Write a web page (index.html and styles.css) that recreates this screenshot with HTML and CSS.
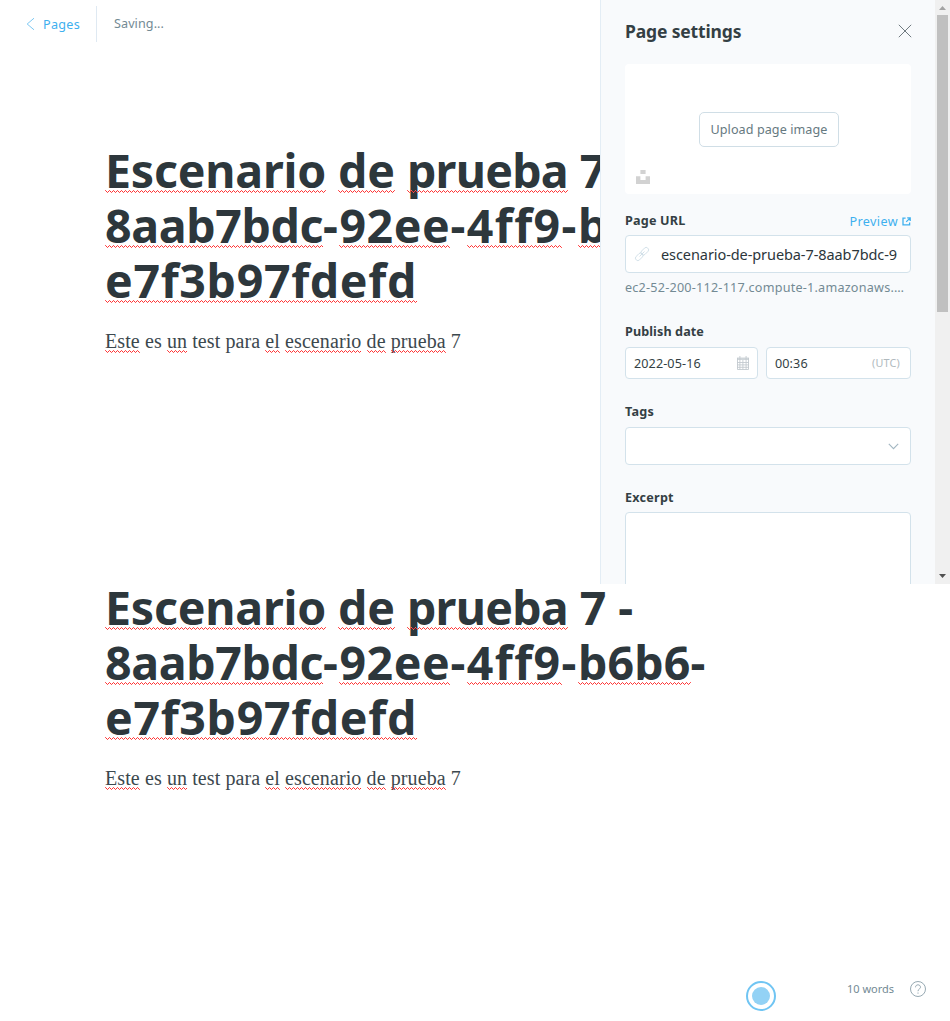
FILE: index.html
```html
<!DOCTYPE html>
<html lang="en">
<head>
<meta charset="utf-8">
<title>Page editor</title>
<link rel="stylesheet" href="styles.css">
</head>
<body>
<div class="screen">
  <main class="editor">
    <header class="topbar">
      <a class="back"><svg class="back-icon" width="9" height="14" viewBox="0 0 9 14"><path d="M8 1.2 1.2 7 8 12.8"/></svg><span class="back-text">Pages</span></a>
      <span class="status">Saving...</span>
    </header>
    <article class="post">
      <h1 class="title"><span class="sp w-escenario">Escenario</span> <span class="sp">de</span> <span class="sp w-prueba">prueba</span> <span>7</span> <span class="dash">-</span><br><span class="sp w-8aab">8aab7bdc</span><span class="dash">-</span><span class="sp w-92ee">92ee</span><span class="dash">-</span><span class="sp w-4ff9">4ff9</span><span class="dash">-</span><span class="sp w-b6b6">b6b6</span><span class="dash">-</span><br><span class="sp w-e7f3">e7f3b97fdefd</span></h1>
      <p class="text"><span class="sp">Este</span> es <span class="sp">un</span> test para <span class="sp">el</span> <span class="sp">escenario</span> <span class="sp">de</span> <span class="sp">prueba</span> 7</p>
    </article>
  </main>
  <aside class="panel">
    <div class="panel-head">
      <h2 class="panel-title">Page settings</h2>
      <svg class="close" width="14" height="14" viewBox="0 0 14 14"><path d="M.8.8 13.2 13.2M13.2.8.8 13.2"/></svg>
    </div>
    <div class="uploader">
      <button class="upload-btn">Upload page image</button>
      <svg class="unsplash" width="14" height="14" viewBox="0 0 14 14"><path d="M4.400 0h5.200v4H4.400zM0 6.200h4.400v3.900h5.200V6.200H14V14H0z"/></svg>
    </div>
    <div class="label-row">
      <label class="label l-url">Page URL</label>
      <a class="preview"><span>Preview</span><svg width="9" height="9" viewBox="0 0 9 9"><path d="M3.600 1.200H1v6.600h6.600V5.400M5.200.9h3v3M8 1.100 4.200 4.900"/></svg></a>
    </div>
    <div class="field url">
      <svg class="link-icon" width="14" height="14" viewBox="0 0 14 14"><g transform="rotate(-45 7 7)"><rect x="-1.2" y="4.6" width="8.6" height="4.8" rx="2.2"/><rect x="6.6" y="4.6" width="8.6" height="4.8" rx="2.2"/><path d="M3.500 7h7"/></g></svg>
      <span class="slug">escenario-de-prueba-7-8aab7bdc-92ee-4ff9-b6b6-e7f3b97fdefd</span>
    </div>
    <p class="help">ec2-52-200-112-117.compute-1.amazonaws.…</p>
    <label class="label l-date">Publish date</label>
    <div class="dates">
      <div class="field date"><span>2022-05-16</span><svg width="12" height="14" viewBox="0 0 12 14"><path class="cal-head" d="M0 1.500h12V4H0z"/><path d="M.5 2v11.500h11V2M2.900 0v13.500M5.900 4v9.500M9.100 0v13.500M0 6.500h12M0 8.900h12M0 11.300h12"/></svg></div>
      <div class="field time"><span>00:36</span><span class="utc">(UTC)</span></div>
    </div>
    <label class="label l-tags">Tags</label>
    <div class="field tags"><svg width="11" height="7" viewBox="0 0 11 7"><path d="M.8.8 5.500 5.600 10.200.8"/></svg></div>
    <label class="label l-excerpt">Excerpt</label>
    <div class="field excerpt"></div>
  </aside>
  <div class="scrollbar">
    <svg class="arrow" width="15" height="15" viewBox="0 0 15 15"><path class="up" d="M4 10h7L7.500 6z"/></svg>
    <div class="thumb"></div>
    <svg class="arrow arrow-down" width="15" height="15" viewBox="0 0 15 15"><path class="down" d="M4 5h7l-3.500 4z"/></svg>
  </div>
</div>
<div class="below">
  <article class="post">
    <h1 class="title"><span class="sp w-escenario">Escenario</span> <span class="sp">de</span> <span class="sp w-prueba">prueba</span> <span>7</span> <span class="dash">-</span><br><span class="sp w-8aab">8aab7bdc</span><span class="dash">-</span><span class="sp w-92ee">92ee</span><span class="dash">-</span><span class="sp w-4ff9">4ff9</span><span class="dash">-</span><span class="sp w-b6b6">b6b6</span><span class="dash">-</span><br><span class="sp w-e7f3">e7f3b97fdefd</span></h1>
    <p class="text"><span class="sp">Este</span> es <span class="sp">un</span> test para <span class="sp">el</span> <span class="sp">escenario</span> <span class="sp">de</span> <span class="sp">prueba</span> 7</p>
  </article>
  <footer class="footer">
    <svg class="pulse" width="30" height="30" viewBox="0 0 30 30"><circle class="ring" cx="15" cy="15" r="14"/><circle class="dot" cx="15" cy="15" r="9"/></svg>
    <span class="words">10 words</span>
    <svg class="help-icon" width="16" height="16" viewBox="0 0 16 16"><circle cx="8" cy="8" r="7.5"/><path d="M5.500 6.300c0-3.300 5-3.300 5 0C10.500 8 8 7.900 8 10.200M8 11.500v1.200"/></svg>
  </footer>
</div>
</body>
</html>
```
FILE: styles.css
```css
* { box-sizing: border-box; }
body { margin: 0; background: #fff; font-family: "Noto Sans", sans-serif; font-size: 12.6px; color: #343f44; }
h1, h2, p { margin: 0; }
svg { display: block; fill: none; flex: none; }

.screen { display: flex; height: 584px; overflow: hidden; }
.editor { width: 600px; flex: none; overflow: hidden; }
.topbar { display: flex; align-items: center; height: 36px; margin-top: 6px; padding-left: 26px; }
.back { display: flex; align-items: center; height: 36px; width: 71px; border-right: 1px solid #dfe9f2; color: #3eb0ef; letter-spacing: .28px; }
.back-icon { stroke: #7cc8f3; margin-right: 8px; }
.status { margin-left: 17px; color: #738a94; letter-spacing: .08px; padding-bottom: 2px; }
.post { padding-left: 105px; white-space: nowrap; }
.editor .post { margin-top: 101px; }
.title { font-weight: 700; font-size: 46.5px; line-height: 55px; color: #2d373c; word-spacing: -.2px; }
.text { margin-top: 18px; font-family: "Liberation Serif", serif; font-size: 20px; line-height: 30px; color: #3c484e; letter-spacing: .095px; }

/* Spell-check squiggle */
.sp { position: relative; }
.sp::after {
  content: ""; position: absolute; left: 0; right: 0; top: 20px; height: 3px;
  background:
    linear-gradient(90deg, #ff5a5a 1px, transparent 1px) 0 0 / 4px 1px repeat-x,
    linear-gradient(90deg, transparent 1px, #ff3030 1px, #ff3030 2px, transparent 2px, transparent 3px, #ff3030 3px) 0 1px / 4px 1px repeat-x,
    linear-gradient(90deg, transparent 2px, #ff5a5a 2px, #ff5a5a 3px, transparent 3px) 0 2px / 4px 1px repeat-x;
}
.title .sp::after { top: 52px; }
.w-escenario { letter-spacing: -.22px; }
.w-prueba { letter-spacing: -.73px; }
.w-8aab { letter-spacing: -.38px; }
.w-92ee { letter-spacing: .57px; }
.w-4ff9 { letter-spacing: 1.4px; }
.w-b6b6 { letter-spacing: .13px; }
.w-e7f3 { letter-spacing: .66px; }
.dash { letter-spacing: 1.5px; }

.panel { width: 335px; flex: none; padding: 0 24px; background: #f8fafc; border-left: 1px solid #e3edf5; }
.panel-head { display: flex; align-items: center; justify-content: space-between; height: 62px; }
.panel-title { font-size: 17.5px; letter-spacing: -.15px; }
.close { margin-right: -1px; stroke: #5f6b72; stroke-width: .9; }
.uploader { position: relative; display: flex; align-items: center; justify-content: center; height: 130px; margin-top: 2px; background: #fff; border-radius: 4px; }
.upload-btn { width: 140px; height: 35px; margin-left: 2px; padding: 0; background: #fff; border: 1px solid #d0dee6; border-radius: 5px; font: inherit; color: #66797f; letter-spacing: .07px; }
.unsplash { position: absolute; left: 11px; bottom: 10px; fill: #d2d2d2; }
.label { display: block; font-weight: 700; line-height: 18px; }
.label-row { display: flex; justify-content: space-between; margin-top: 18px; height: 23px; }
.l-url { letter-spacing: .2px; }
.l-date { margin-top: 26px; letter-spacing: .1px; }
.l-tags { margin-top: 24px; letter-spacing: .23px; }
.l-excerpt { margin-top: 24px; letter-spacing: .23px; }
.preview { display: flex; gap: 4px; color: #3eb0ef; letter-spacing: .4px; line-height: 19px; }
.preview svg { margin-top: 5px; stroke: #3eb0ef; stroke-width: 1.3; }
.field { display: flex; align-items: center; background: #fff; border: 1px solid #d3e2eb; border-radius: 4px; }
.url { height: 38px; padding: 0 13px 0 9px; }
.link-icon { stroke: #cbdbe5; stroke-width: .8; overflow: visible; }
.slug { margin-left: 12px; overflow: hidden; white-space: nowrap; font-size: 14.5px; letter-spacing: -.08px; color: #2c363b; }
.help { margin-top: 6px; line-height: 18px; color: #738a94; letter-spacing: .23px; white-space: nowrap; }
.dates { display: flex; gap: 8px; margin-top: 6px; }
.date, .time { height: 32px; justify-content: space-between; padding: 0 8px; letter-spacing: .1px; }
.date { width: 133px; }
.time { width: 145px; padding-right: 10px; }
.date svg { stroke: #c3cacf; stroke-width: .9; }
.date .cal-head { fill: #d0d6da; stroke: none; }
.utc { font-size: 10.8px; color: #b0b9be; letter-spacing: .2px; padding-bottom: 1px; }
.tags { height: 38px; margin-top: 6px; justify-content: flex-end; padding-right: 11px; }
.tags svg { stroke: #a3b7c2; stroke-width: 1.1; }
.excerpt { height: 120px; margin-top: 5px; }

.scrollbar { width: 15px; flex: none; display: flex; flex-direction: column; background: #f0f0f0; }
.up { fill: #a3a3a3; }
.down { fill: #505050; }
.thumb { height: 297px; margin: 0 2px; background: #c0c0c0; }
.arrow-down { margin-top: auto; }

.below { height: 437px; display: flex; flex-direction: column; }
.below .post { margin-top: -4px; }
.footer { display: flex; align-items: center; height: 30px; margin-top: auto; margin-bottom: 10px; padding-left: 746px; }
.ring { fill: #fff; stroke: #70c5f3; stroke-width: 2; }
.dot { fill: #93d2f5; }
.words { width: 63px; margin-left: 71px; margin-bottom: 16px; font-size: 11px; color: #738a94; }
.help-icon { margin-bottom: 14px; stroke: #8b9fa9; stroke-width: .9; }
```
